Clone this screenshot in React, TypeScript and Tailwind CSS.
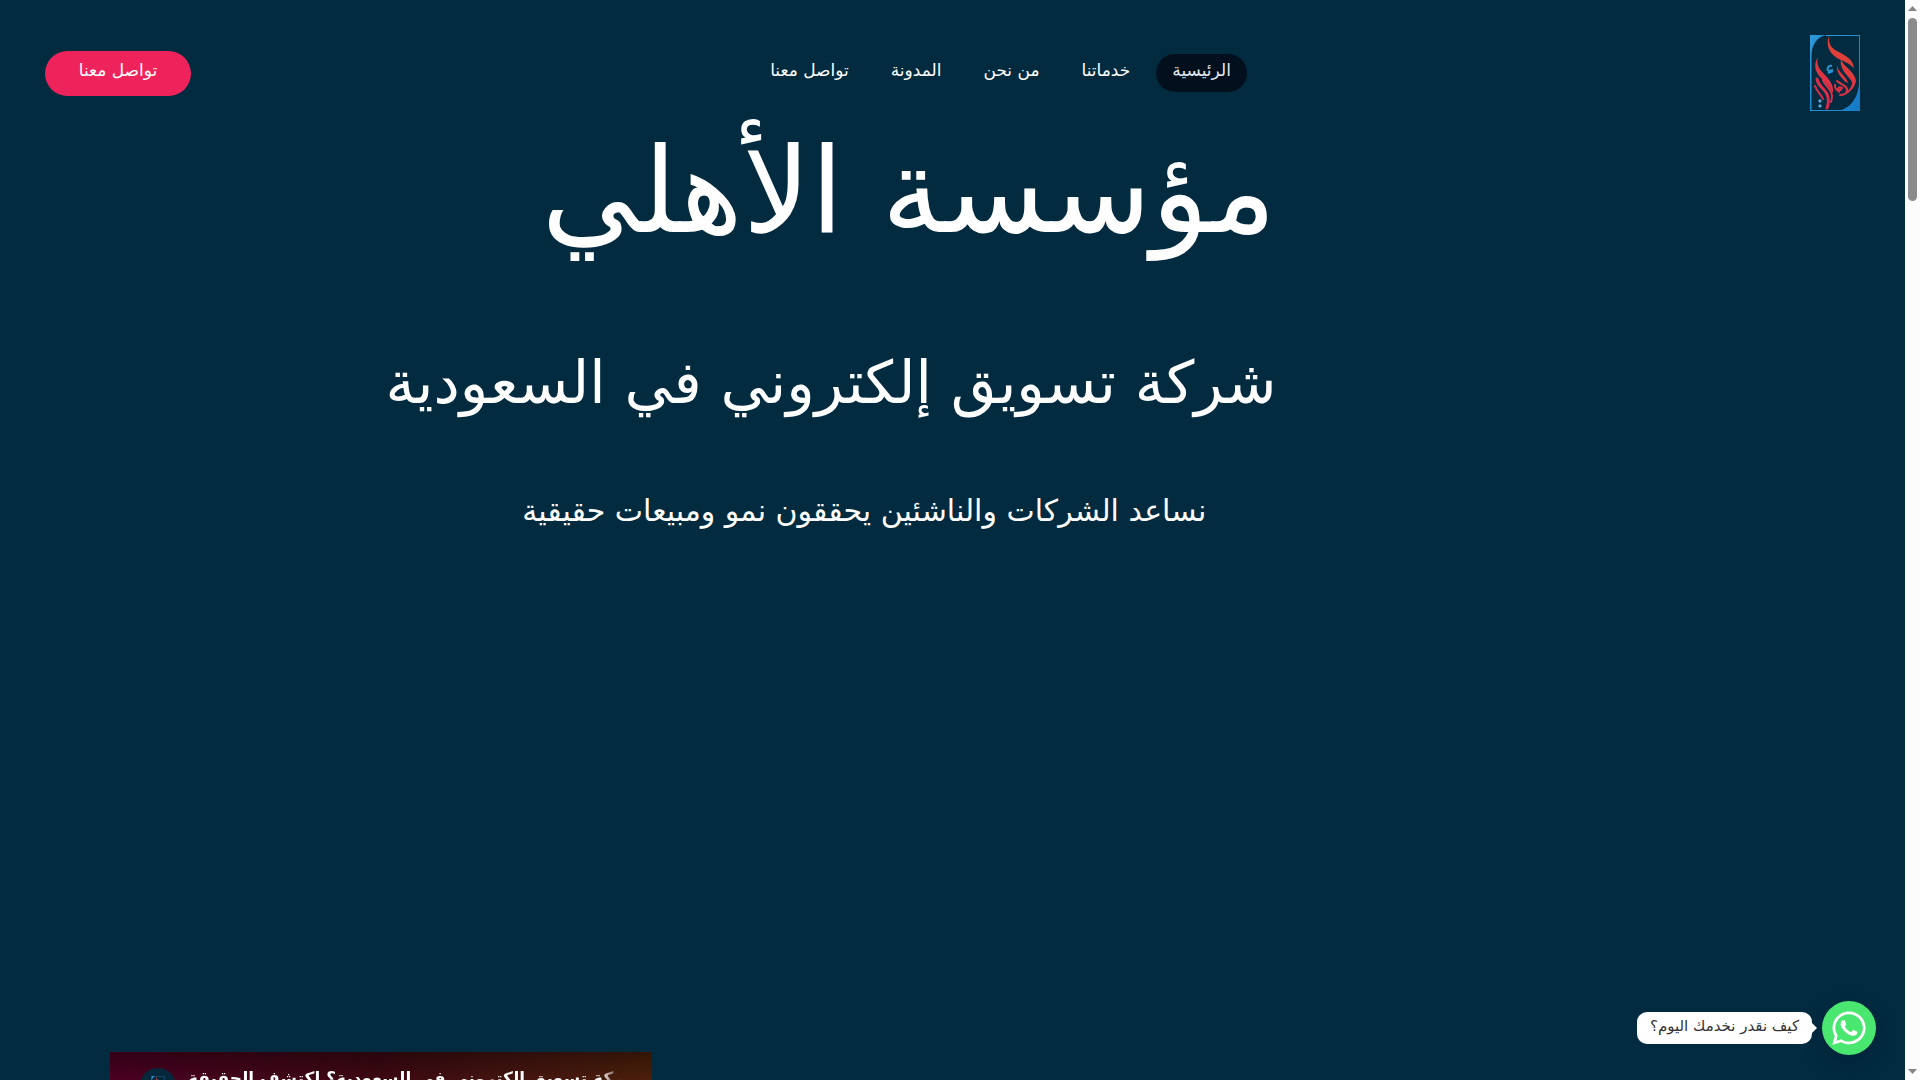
import React from 'react';
import { FaWhatsapp } from 'react-icons/fa';

const navItems = [
  { label: 'الرئيسية', href: '#home', active: true },
  { label: 'خدماتنا', href: '#services', active: false },
  { label: 'من نحن', href: '#about', active: false },
  { label: 'المدونة', href: '#blog', active: false },
  { label: 'تواصل معنا', href: '#contact', active: false }
];

const Logo: React.FC<{ className?: string }> = ({ className }) => (
  <svg viewBox="0 0 50 76" className={className} role="img" aria-label="الأهلي">
    <defs>
      <linearGradient id="frame" x1="0" y1="0" x2="1" y2="1">
        <stop offset="0" stopColor="#2f9ad8" />
        <stop offset="1" stopColor="#1379c8" />
      </linearGradient>
      <linearGradient id="ink" gradientUnits="userSpaceOnUse" x1="40" y1="0" x2="8" y2="76">
        <stop offset="0" stopColor="#e04a2e" />
        <stop offset="1" stopColor="#dc2352" />
      </linearGradient>
    </defs>
    <path d="M0 0H16C8 2 2 8 1.500 20V75H0Z" fill="url(#frame)" />
    <path d="M50 76H28C40 73 47 65 49 50V1H16V0H50Z" fill="url(#frame)" />
    <path d="M0 75H50V76H0Z" fill="url(#frame)" />
    <g fill="url(#ink)">
      <path d="M19.500 0C18 7 20 12 26 15.500C33 19.500 43 23 44 33C38 27 30 25.500 25 21.500C17.500 16 16 7 19.500 0Z" />
      <path d="M31 24C33 32 45 36 46 46C44.500 53 40 57 35 60C38 55 43 51 42 47C39 41 29 35 31 24Z" />
      <path d="M27 30C28 38 36 40 38 48L35.500 47C32 43 26 38 27 30Z" />
      <path d="M8 22C6 29 9 34 14 39C20 45 24 51 23 58C20 53 16 48 11 43C5 37 3 29 8 22Z" />
    </g>
    <g fill="none" stroke="url(#ink)" strokeWidth="2" strokeLinecap="round">
      <path d="M7 44C8 51 14 53 17 59C19 64 19 68 17 73" strokeWidth="3" />
      <path d="M13 45C14 50 19 52 21 57C23 61 22 64 21 67" />
      <path d="M5 51C7 57 11 59 13 64" />
      <path d="M27 46C32 50 38 51 37 56C36 59 33 60 30 60" />
      <path d="M25 50C25 56 30 57 32 53C29 51 27 54 29 57" />
    </g>
    <path d="M22 31C18 30 16 35 19 36L23 35M18 38L23 36" fill="none" stroke="#2b93d1" strokeWidth="2" />
    <path d="M10 64L12 66L10 68L8 66ZM10 69L12 71L10 73L8 71Z" fill="#58a8d8" />
  </svg>
);

const Header: React.FC = () => (
  <header className="flex items-center justify-between px-[45px] pt-[35px]">
    <a href="#home">
      <Logo className="h-[76px] w-[50px]" />
    </a>
    <nav className="flex items-center gap-[10px]">
      {navItems.map((item) => (
        <a
          key={item.href}
          href={item.href}
          className={
            item.active
              ? 'rounded-full bg-[#020f1c] px-4 pt-1 pb-2.5 text-[17px] leading-6 text-slate-200'
              : 'rounded-full px-4 pt-1 pb-2.5 text-[17px] leading-6 text-white'
          }
        >
          {item.label}
        </a>
      ))}
    </nav>
    <button type="button" className="h-[45px] w-[146px] rounded-full bg-[#ee235c] pb-1 text-[17px] text-white">
      تواصل معنا
    </button>
  </header>
);

const VideoCard: React.FC = () => (
  <article
    dir="ltr"
    className="h-[305px] w-[542px] bg-linear-to-r from-[#5a0028] via-[#4a0a16] to-[#5c260c]"
  >
    <div className="flex h-full items-start gap-3 bg-linear-to-b from-black/45 to-transparent to-15% px-[30px] pt-4">
      <span className="flex h-9 w-9 shrink-0 items-center justify-center rounded-full bg-[#06283d]">
        <Logo className="h-5 w-4" />
      </span>
      <h3 className="min-w-0 flex-1 overflow-hidden bg-linear-to-r from-white from-95% to-transparent bg-clip-text text-[17px] leading-5 font-bold whitespace-nowrap text-transparent">
        شركة تسويق إلكتروني في السعودية؟ اكتشف الحقيقة
      </h3>
    </div>
  </article>
);

const ChatBubble: React.FC = () => (
  <div className="absolute bottom-[25px] right-[29px] flex items-center gap-[10px]">
    <button
      type="button"
      aria-label="واتساب"
      className="flex h-[54px] w-[54px] items-center justify-center rounded-full bg-[#49e670] text-white shadow-[0_8px_20px_rgba(0,20,40,0.3)]"
    >
      <FaWhatsapp size={38} />
    </button>
    <span className="relative h-8 w-[175px] rounded-[10px] bg-white text-center text-[15px] leading-7 text-[#333]">
      كيف نقدر نخدمك اليوم؟
      <svg viewBox="0 0 5 10" className="absolute top-[11px] -right-[5px] h-[10px] w-[5px]" aria-hidden="true">
        <path d="M0 0L5 5L0 10Z" fill="#fff" />
      </svg>
    </span>
  </div>
);

const ScrollTrack: React.FC = () => (
  <div className="flex w-[15px] shrink-0 flex-col items-center justify-between bg-[#fcfcfc] py-[6px]" aria-hidden="true">
    <div className="flex flex-col items-center gap-[7px]">
      <svg viewBox="0 0 9 5" className="h-[5px] w-[9px]">
        <path d="M0 5L4.500 0L9 5Z" fill="#858585" />
      </svg>
      <div className="h-[183px] w-[9px] rounded-full bg-[#8b8b8b]" />
    </div>
    <svg viewBox="0 0 9 5" className="h-[5px] w-[9px]">
      <path d="M0 0H9L4.500 5Z" fill="#858585" />
    </svg>
  </div>
);

const App: React.FC = () => {
  return (
    <div className="flex h-screen overflow-hidden bg-[#022b40] font-['DejaVu_Sans',sans-serif]">
      <div dir="rtl" className="relative flex min-w-0 flex-1 flex-col">
        <Header />

        {/* Hero */}
        <main className="flex flex-1 flex-col">
          <section className="ps-[33%] text-white">
            <h1 className="text-[119px] leading-[160px] whitespace-nowrap">مؤسسة الأهلي</h1>
            <h2 className="mt-16 text-[59px] leading-[96px] whitespace-nowrap">شركة تسويق إلكتروني في السعودية</h2>
            <p className="mt-12 ps-[70px] text-[30px] leading-[64px] whitespace-nowrap">
              نساعد الشركات والناشئين يحققون نمو ومبيعات حقيقية
            </p>
          </section>

          {/* Video preview */}
          <section className="mt-auto -mb-[277px] flex justify-end px-[110px]">
            <VideoCard />
          </section>
        </main>

        <ChatBubble />
      </div>
      <ScrollTrack />
    </div>
  );
};

export default App;
